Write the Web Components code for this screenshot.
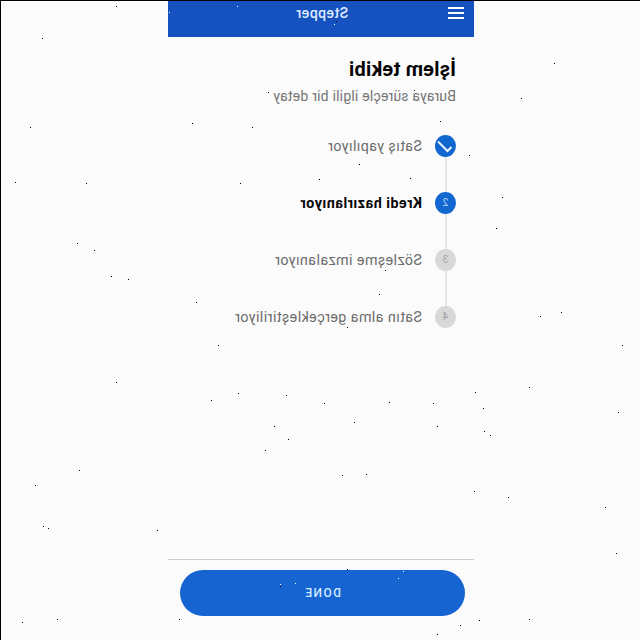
<!DOCTYPE html>
<html lang="tr"><head><meta charset="utf-8"><title>Stepper</title>
<style>
html,body{margin:0;height:640px;background:#fbfbfb;overflow:hidden}
body{box-sizing:border-box;border-left:1px solid #000;border-top:1px solid #000;position:relative}
</style></head><body>
<stepper-screen></stepper-screen>
<dust-layer></dust-layer>
<script>
const define = (name, html, setup) => customElements.define(name, class extends HTMLElement {
  connectedCallback() {
    if (this.shadowRoot) return;
    this.attachShadow({mode: 'open'}).innerHTML = html;
    if (setup) setup(this, this.shadowRoot);
  }
});

define('app-bar', `<style>
:host{display:grid;grid-template-columns:36px 1fr 38px;align-items:start;height:36px;background:#1651c0;color:#dfeaff;flex:none}
svg{display:block;margin:6px 0 0 10px}
span{text-align:center;font-size:14px;font-weight:500;line-height:16px;margin-top:4px;letter-spacing:.5px}
</style><svg width="17" height="12" viewBox="0 0 17 12"><path d="M0 1h16M0 6h16M0 11h16" stroke="#fff" stroke-width="1.8"/></svg><span><slot></slot></span>`);

define('step-item', `<style>
:host{display:grid;grid-template-columns:21px 1fr;column-gap:13px;height:57px}
.rail{display:flex;flex-direction:column;align-items:flex-start}
.dot{width:21px;height:22px;border-radius:50%;background:#d8d8d8;color:#a2a2a2;display:flex;align-items:center;justify-content:center;font-size:10px;line-height:20px;flex:none}
.line{width:2px;flex:1;background:#e6e6e6;margin-left:9px}
:host([last]) .line{display:none}
:host([state=done]) .dot,:host([state=active]) .dot{background:#1167cf;color:#b5dcff}
.label{font-size:14.3px;line-height:22px;color:#6c6c6c;white-space:nowrap;letter-spacing:.42px}
:host([state=active]) .label{font-weight:700;color:#080808;letter-spacing:.49px}
</style><div class="rail"><div class="dot"></div><div class="line"></div></div><div class="label"><slot></slot></div>`,
(el, root) => {
  const dot = root.querySelector('.dot');
  if (el.getAttribute('state') === 'done')
    dot.innerHTML = '<svg width="21" height="22" viewBox="0 0 21 22"><path d="M4.5 12L8.5 16L18 6.5" fill="none" stroke="#e8f4ff" stroke-width="2"/></svg>';
  else dot.textContent = el.getAttribute('number');
});

define('done-button', `<style>
:host{display:block;padding:10px 12px 0 9px;height:70px;border-top:1px solid #d3cccf}
button{display:block;width:100%;height:46px;border:0;padding:0;border-radius:23px;background:#1663d2;color:#cfeaff;font:500 12px Roboto,sans-serif;letter-spacing:1.4px}
</style><button><slot></slot></button>`);

define('stepper-screen', `<style>
:host{display:flex;flex-direction:column;width:306px;height:639px;margin-left:167px;font-family:Roboto,"Liberation Sans",sans-serif;transform:scaleX(-1)}
main{flex:1;padding:20px 18px 0}
h1{margin:0;font-size:20px;line-height:24px;font-weight:700;color:#050505;letter-spacing:.22px}
p{margin:4px 0 0;font-size:14px;line-height:22px;color:#747474;white-space:nowrap;letter-spacing:.2px}
.steps{display:flex;flex-direction:column;margin-top:28px}
</style><app-bar>Stepper</app-bar>
<main><h1>İşlem tekibi</h1><p>Buraya süreçle ilgili bir detay</p>
<div class="steps">
<step-item number="1" state="done">Satış yapılıyor</step-item>
<step-item number="2" state="active">Kredi hazırlanıyor</step-item>
<step-item number="3">Sözleşme imzalanıyor</step-item>
<step-item number="4" last>Satın alma gerçekleştiriliyor</step-item>
</div></main><done-button>DONE</done-button>`);

define('dust-layer', `<style>:host{position:absolute;left:-1px;top:-1px;width:640px;height:640px;pointer-events:none}svg{display:block}</style>
<svg width="640" height="640" shape-rendering="crispEdges"><path class="d" fill="#000"/><path class="l" fill="#fff"/></svg>`, (el, root) => {
  const pts = s => s.split(' ').map(p => 'M' + p + 'h1v1h-1z').join('');
  root.querySelector('.d').setAttribute('d', pts('116,6 42,38 554,63 521,98 268,92 414,90 30,127 252,127 192,123 440,121 15,182 86,183 359,164 469,155 240,183 319,179 410,178 502,197 496,228 77,243 94,250 111,276 128,279 196,302 385,270 379,294 347,327 561,312 540,316 218,345 622,345 116,382 529,387 475,392 238,393 286,395 211,400 483,408 324,403 389,402 433,403 618,412 354,422 274,426 437,426 484,431 490,435 288,439 265,450 79,470 342,475 366,474 35,485 474,491 508,497 605,507 43,526 48,528 157,530 616,553 22,622 57,619 179,619 437,634 460,625 479,620 529,619 347,569 280,586 336,21'));
  root.querySelector('.l').setAttribute('d', pts('169,12 237,6 334,24 280,584 295,583 403,571 398,578'));
});
</script></body></html>
